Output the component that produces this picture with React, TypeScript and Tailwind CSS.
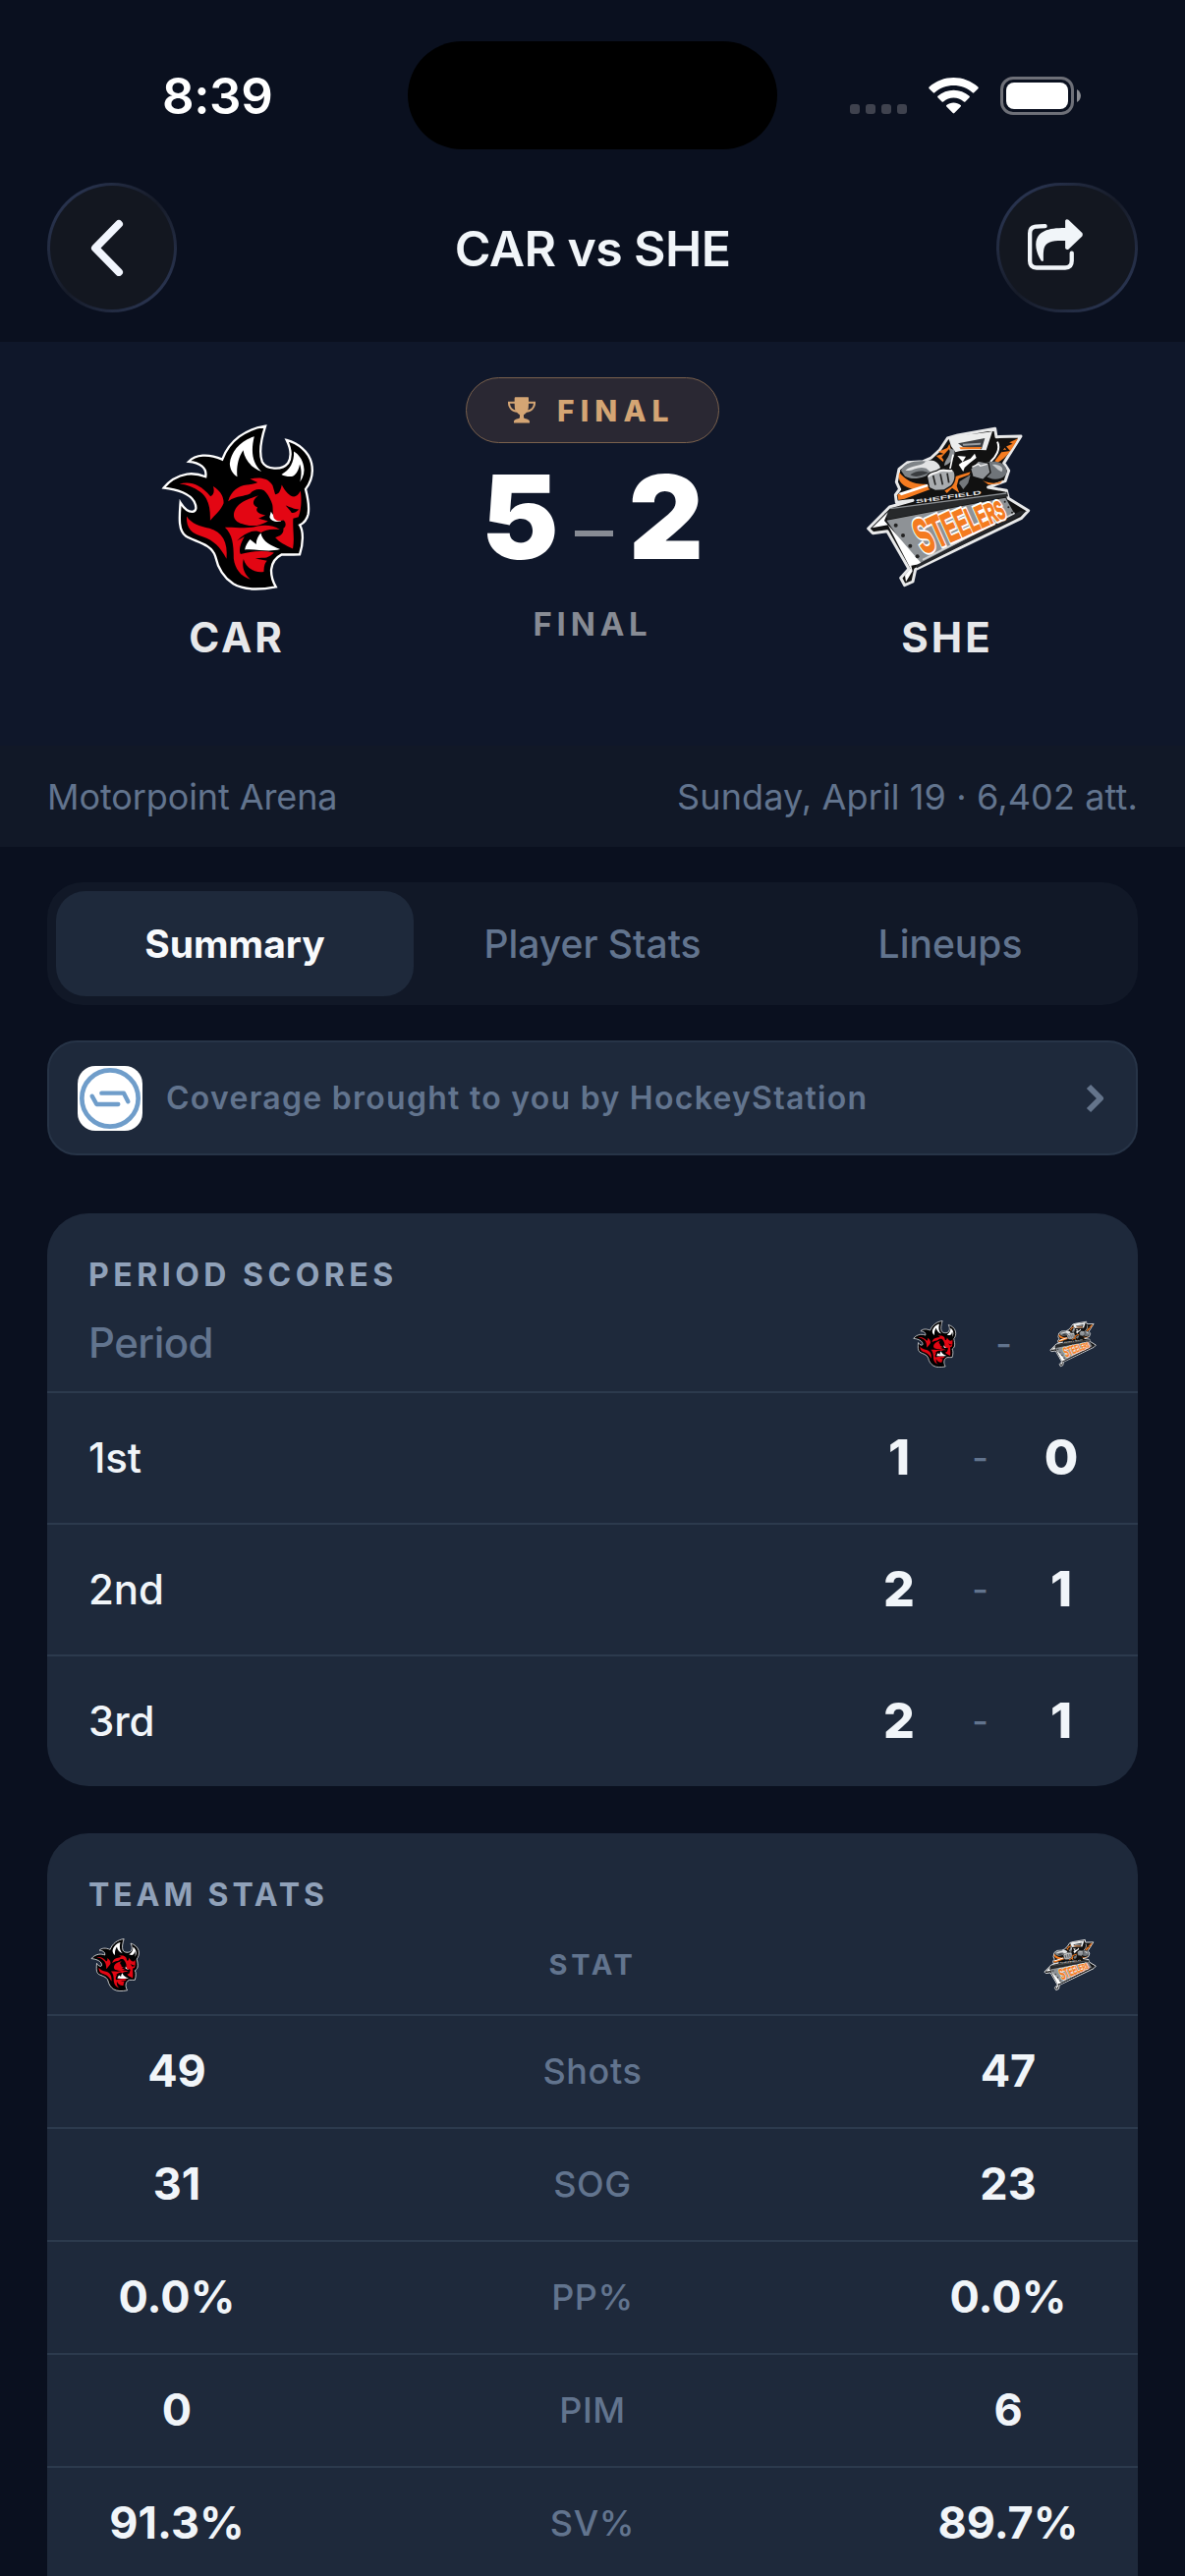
const tabs = ['Summary', 'Player Stats', 'Lineups'];

const periods = [
  { label: '1st', home: 1, away: 0 },
  { label: '2nd', home: 2, away: 1 },
  { label: '3rd', home: 2, away: 1 },
];

const teamStats = [
  { label: 'Shots', home: '49', away: '47' },
  { label: 'SOG', home: '31', away: '23' },
  { label: 'PP%', home: '0.0%', away: '0.0%' },
  { label: 'PIM', home: '0', away: '6' },
  { label: 'SV%', home: '91.3%', away: '89.7%' },
];

const beamLetters = [
  { char: 'S', size: 152 },
  { char: 'T', size: 138 },
  { char: 'E', size: 127 },
  { char: 'E', size: 116 },
  { char: 'L', size: 106 },
  { char: 'E', size: 96 },
  { char: 'R', size: 87 },
  { char: 'S', size: 79 },
];

function DevilsLogo({ className }: { className: string }) {
  return (
    <svg className={className} viewBox="71 64 466 508" aria-hidden="true">
      <path
        d="M390 69C376 112 370 150 380 178C392 202 440 206 459 183C473 160 466 134 455 112C490 122 522 146 531 182C538 214 530 240 513 262C519 285 525 315 521 338C517 356 507 366 495 372C507 390 506 428 495 462C478 463 458 462 440 462C420 472 410 486 408 508C407 526 413 545 422 561C370 571 325 572 292 552C262 532 245 505 237 468C224 428 176 424 147 406C122 388 127 345 130 303C140 319 152 331 166 331C180 330 180 316 172 300C160 278 122 262 79 258C96 236 118 222 150 216C172 213 192 218 207 224C212 196 188 181 155 178C176 156 214 152 258 171C280 112 330 78 390 69Z"
        fill="#000"
        stroke="#fff"
        strokeWidth="7"
      />
      <g fill="#fff">
        <path d="M356 101C315 112 284 148 281 184C282 202 291 216 304 224C301 199 305 169 322 143C327 172 346 197 378 208C349 181 345 145 356 101Z" />
        <path d="M477 147C479 179 464 205 439 217C453 224 473 227 480 218C489 210 493 198 495 186C502 205 500 222 496 240C507 224 511 207 507 191C503 171 492 156 477 147Z" />
        <path d="M407 331C415 348 428 348 438 360C422 364 405 358 403 347Z" />
        <path d="M376 396C368 405 361 418 362 431L343 416C336 425 329 435 327 447C365 445 398 456 435 446C410 435 381 424 376 396Z" />
      </g>
      <g fill="#e30613">
        <path d="M127 246C159 237 190 246 222 284C232 280 235 268 230 253C252 266 263 284 262 305C254 326 238 338 221 358C222 319 216 289 190 270C170 256 149 248 127 246Z" />
        <path d="M149 345C164 368 189 376 219 382C258 393 276 425 271 475C250 436 232 420 200 408C164 398 148 383 149 345Z" />
        <path d="M276 299C285 268 307 252 333 249C348 247 360 245 366 241L343 231C371 225 396 226 412 250L420 278C430 278 436 270 440 249C455 277 480 303 497 268C502 292 499 330 491 347L475 352C473 387 480 413 474 444C452 435 430 423 420 410C435 405 447 399 445 382C455 377 453 361 445 357C433 361 425 361 416 351C411 333 414 320 411 308C405 290 397 277 386 266C371 259 353 263 343 276C325 285 304 281 276 299Z" />
        <path d="M369 281C350 289 312 298 299 322C287 343 294 362 320 368C344 377 371 377 398 360L369 352L390 342C370 339 357 329 366 318C345 309 353 292 369 281Z" />
        <path d="M266 379C293 377 333 386 366 375C392 371 415 373 434 386C405 382 389 388 377 395C355 381 326 398 303 420L326 407C315 427 307 448 314 461C348 452 381 449 416 456C409 464 397 474 377 472L359 474L395 481C386 490 386 502 385 515C360 520 330 504 323 476C317 499 325 523 344 538C314 529 297 505 293 475C293 430 289 401 266 379Z" />
      </g>
      <path d="M452 312C465 316 475 323 493 324C480 336 470 338 467 329Z" />
    </svg>
  );
}

function SteelersLogo({ className }: { className: string }) {
  const letters = beamLetters.map((letter, i) => (
    <tspan key={i} fontSize={letter.size}>{letter.char}</tspan>
  ));

  return (
    <svg className={className} viewBox="64 72 504 492" aria-hidden="true">
      <path
        d="M72 384L137 318L208 298L158 304L155 281L168 264L158 242L166 202L192 182L240 179L264 168L290 144L314 108L345 99L459 79L463 104L538 102L486 184L501 207L490 239L438 258L494 268L500 292L561 329L540 352L216 509L208 546L183 557L171 535L196 507L130 392L86 398Z"
        fill="#111"
        stroke="#e8e9ea"
        strokeWidth="9"
        strokeLinejoin="round"
      />
      {/* Player */}
      <path d="M458 178L500 122L529 109C510 145 493 168 467 183Z" fill="#f47b20" />
      <path d="M466 119C477 141 461 167 445 180" fill="none" stroke="#fff" strokeWidth="6" />
      <path d="M487 117L505 125L488 132L499 145L479 148" fill="none" stroke="#111" strokeWidth="6" />
      <path d="M167 213C158 238 177 259 218 266L250 255L248 248C211 250 188 238 167 213Z" fill="#f47b20" />
      <path d="M172 207C181 178 234 171 267 183C288 189 288 208 271 215C245 223 215 241 184 224Z" fill="#7f8488" />
      <path d="M185 207C203 188 238 194 247 179C265 169 289 181 292 199L267 216L249 200C221 192 209 210 185 207Z" fill="#e2e3e4" />
      <path d="M200 220C216 206 240 205 256 214C240 220 220 232 200 220Z" fill="#3a3d40" />
      <path d="M286 149L313 138L320 125L326 151L308 165L300 180L279 162L302 156Z" fill="#f47b20" />
      <path d="M296 166L318 142L324 150L304 178Z" fill="#111" />
      <path d="M318 111C327 96 388 99 451 87L432 145C396 143 359 143 338 151L325 133Z" fill="#eceded" />
      <path d="M346 124L428 108L418 142L362 136Z" fill="#3b3e42" />
      <path d="M360 125L416 122L414 128L362 131Z" fill="#9a9ea2" />
      <path d="M350 136L418 135L415 142L354 142Z" fill="#f47b20" />
      <path d="M320 138C326 162 306 171 304 192C322 188 339 166 335 145Z" fill="#8f9498" />
      <path d="M331 158L321 205L311 203" fill="none" stroke="#fff" strokeWidth="5" />
      <path d="M344 162L370 164L360 181L384 170L397 155L402 168L382 184L366 198L362 210L348 189L360 180Z" fill="#fff" />
      <path d="M326 238L349 228L342 254L350 275L328 260L312 276L304 267Z" fill="#f47b20" />
      <path d="M351 240L384 220L377 245L362 264L350 247Z" fill="#74787c" />
      <path d="M161 280L384 211L380 220L183 293L164 297Z" fill="#f47b20" />
      <path d="M164 276L252 248L256 255L173 283Z" fill="#fff" />
      <path d="M421 237C447 249 471 248 485 234L474 247L439 250Z" fill="#f47b20" />
      <path d="M433 181C475 174 499 190 494 215C481 239 444 238 427 220Z" fill="#6f7479" />
      <path d="M450 188C475 187 488 199 479 211C467 205 461 197 450 188Z" fill="#c4c7c9" />
      <path d="M251 225C258 208 279 212 287 204C304 196 314 207 328 202C342 212 339 240 325 254L303 267L276 268L258 260Z" fill="#a9acaf" stroke="#111" strokeWidth="4" />
      <path d="M256 226C262 214 280 216 288 209C304 201 314 211 328 207" fill="none" stroke="#f4f4f4" strokeWidth="6" />
      <path d="M270 222L277 251M292 217L299 250M313 215L318 244" fill="none" stroke="#222" strokeWidth="5" />
      <path d="M384 202L408 177L439 184L445 213L423 235L391 226Z" fill="#8f9397" stroke="#111" strokeWidth="4" />
      <path d="M389 196L408 187L414 193L435 187" fill="none" stroke="#f4f4f4" strokeWidth="4" />
      {/* Beam */}
      <path d="M122 339L146 322L496 272L499 286L132 356Z" fill="#27292b" />
      <path d="M139 323L494 276" fill="none" stroke="#8b8f93" strokeWidth="4" />
      <path d="M128 359L491 290L519 340L221 495Z" fill="#8e9296" />
      <path d="M84 382L132 334L121 360L235 491L203 497L207 514L187 547L184 527L201 506L132 373Z" fill="#fff" />
      <path d="M218 496L537 330L553 332L524 351L220 505Z" fill="#24262a" />
      <path d="M238 479L519 337" fill="none" stroke="#d2d4d5" strokeWidth="5" />
      <g fill="#222">
        <circle cx="156" cy="374" r="6" />
        <circle cx="178" cy="405" r="6" />
        <circle cx="200" cy="437" r="6" />
        <circle cx="222" cy="469" r="6" />
        <circle cx="489" cy="302" r="3" />
        <circle cx="500" cy="319" r="3" />
        <circle cx="511" cy="335" r="3" />
      </g>
      <text
        transform="translate(218 307) rotate(-8) scale(1 0.75)"
        textLength="202"
        lengthAdjust="spacingAndGlyphs"
        className="fill-[#e4e5e6] font-['Liberation_Sans'] text-[22px] font-bold"
      >
        SHEFFIELD
      </text>
      {/* White keyline sits under the whole word, orange letters on top */}
      <g transform="matrix(0.43 -0.195 0.4 0.9 240 463)" className="font-['Liberation_Sans'] font-bold">
        <text fill="#fff" stroke="#fff" strokeWidth="17" aria-hidden="true">{letters}</text>
        <text fill="#f47b20" stroke="#f47b20" strokeWidth="5">{letters}</text>
      </g>
    </svg>
  );
}

function StatusBar() {
  return (
    <div className="flex h-[186px] items-start pt-[42px]">
      <div className="flex h-[112px] w-[415px] items-center pl-[165px]">
        <span className="text-[51px] font-semibold tracking-[-0.4px] text-white">8:39</span>
      </div>
      <div className="h-[110px] w-[376px] rounded-full bg-black" />
      <div className="flex h-[111px] flex-1 items-center pl-[74px]">
        <div className="flex gap-[6px] pt-[27px]">
          {[0, 1, 2, 3].map((dot) => (
            <div key={dot} className="size-[10px] rounded-[3px] bg-[#3f424e]" />
          ))}
        </div>
        <svg className="ml-[22px] h-[37px] w-[51px]" viewBox="0 0 51 37" fill="#fff" aria-hidden="true">
          <path d="M.6 9.6C14.5-3.2 36.500-3.200 50.400 9.600Q51.100 10.400 50.400 11.200L46.300 15.300Q45.500 16 44.700 15.300C34 5.700 17 5.700 6.300 15.300Q5.500 16 4.700 15.300L.6 11.200Q-.1 10.400.6 9.600Z" />
          <path d="M9.400 18.800C18.400 10.700 32.600 10.700 41.600 18.800Q42.300 19.600 41.600 20.300L37.400 24.500Q36.700 25.200 35.900 24.500C30 19.200 21 19.200 15.100 24.500Q14.300 25.200 13.600 24.500L9.400 20.300Q8.700 19.600 9.400 18.800Z" />
          <path d="M18.300 28.100C22.300 24.700 28.700 24.700 32.700 28.100Q33.400 28.900 32.700 29.600L26.300 36.100Q25.500 36.900 24.700 36.100L18.300 29.600Q17.600 28.900 18.300 28.100Z" />
        </svg>
        <svg className="ml-[22px] h-[39px] w-[83px]" viewBox="0 0 83 39" aria-hidden="true">
          <rect x="1.500" y="1.500" width="72" height="36" rx="11.500" fill="none" stroke="#6e7078" strokeWidth="3" />
          <rect x="6" y="6" width="63" height="27" rx="8" fill="#fff" />
          <path d="M78 13V26C83.300 23 83.300 16 78 13Z" fill="#8a8c92" />
        </svg>
      </div>
    </div>
  );
}

function NavBar() {
  return (
    <div className="flex h-[162px] items-start justify-between px-[48px]">
      <div className="w-[144px]">
        <button className="block size-[132px] rounded-full bg-linear-to-br from-[#303d5e] via-[#161b28] to-[#303d5e] p-[3px]">
          <span className="flex size-full items-center justify-center rounded-full bg-[#131720] pr-[11px]">
            <svg className="h-[58px] w-[34px]" viewBox="0 0 34 58" fill="none" aria-hidden="true">
              <path d="M29 5L5 29.500L29 54" stroke="#f1f5fd" strokeWidth="8" strokeLinecap="round" strokeLinejoin="round" />
            </svg>
          </span>
        </button>
      </div>
      <h1 className="flex h-[134px] items-center text-[50px] font-semibold tracking-[-0.6px] text-slate-100">CAR vs SHE</h1>
      <button className="h-[132px] w-[144px] rounded-full bg-linear-to-br from-[#303d5e] via-[#161b28] to-[#303d5e] p-[3px]">
        <span className="flex size-full items-center rounded-full bg-[#131720] pb-[7px] pl-[29px]">
          <svg className="h-[52px] w-[56px]" viewBox="618 516 169 156" aria-hidden="true">
            <path
              d="M671 537C655 538 645 537 639 539C629 541 624.500 549 624.500 559V644Q624.500 665 645 665H733Q753 665 753 644V620"
              fill="none"
              stroke="#f1f5f9"
              strokeWidth="13"
              strokeLinecap="round"
            />
            <path
              d="M733 520Q737 514 743 518L785 558Q788 563 785 568L743 608Q737 611 733 605V582C696 581 675 584 668 605C665 617 666 630 666 643Q663 648 659 643C648 626 642 606 643 592C646 552 680 543 733 543Z"
              fill="#f1f5f9"
            />
          </svg>
        </span>
      </button>
    </div>
  );
}

function Scoreboard() {
  return (
    <section className="flex h-[411px] bg-[#0f172a] px-[48px]">
      <div className="flex w-[386px] flex-col items-center pt-[84px]">
        <DevilsLogo className="h-[169px] w-[155px]" />
        <span className="mt-[22px] text-[42px] leading-[52px] font-bold tracking-[2.800px] text-[#e7e8ea]">CAR</span>
      </div>
      <div className="flex flex-1 flex-col items-center pt-[36px]">
        <div className="flex h-[67px] w-[258px] items-center rounded-full border-[1.500px] border-[#7a614d] bg-[#2a2833] pl-[42px]">
          <svg className="h-[27px] w-[28px]" viewBox="0 0 84 80" fill="#d4a574" aria-hidden="true">
            <path d="M22 0H62Q63 0 63 5V14H84V20C83 36 70 46 57 47Q52 53 48 54V63C50 66 66 67 66 74V79H18V74C18 67 34 66 36 63V54Q32 53 27 47C14 46 1 36 0 20V14H20V5Q20 0 22 0ZM6 20C7 31 14 38 22 40Q20 33 20 20ZM78 20H63Q63 33 61 40C70 38 77 31 78 20Z" />
          </svg>
          <span className="ml-[22px] pt-[2px] text-[30px] font-extrabold tracking-[6.100px] text-[#d4a574]">FINAL</span>
        </div>
        <div className="mt-[16px] flex h-[118px] items-center text-[118px] leading-none font-black text-white">
          <span>5</span>
          <span className="mx-[16px] mt-[34px] h-[6px] w-[39px] bg-[#878b94]" />
          <span>2</span>
        </div>
        <span className="mt-[30px] text-[33px] leading-[40px] font-bold tracking-[4.800px] text-[#878b94]">FINAL</span>
      </div>
      <div className="flex w-[386px] flex-col items-center pt-[86px]">
        <SteelersLogo className="h-[164px] w-[168px]" />
        <span className="mt-[25px] pr-[2px] text-[42px] leading-[52px] font-bold tracking-[3px] text-[#e7e8ea]">SHE</span>
      </div>
    </section>
  );
}

function Tabs() {
  return (
    <div className="mt-[36px] flex h-[125px] rounded-[36px] bg-[#111827] p-[9px]">
      {tabs.map((tab, i) => (
        <button
          key={tab}
          className={
            i === 0
              ? 'flex-1 rounded-[30px] bg-[#1e293b] pt-[2px] text-[39px] font-bold text-slate-50'
              : 'flex-1 pt-[2px] text-[39px] font-medium text-slate-500'
          }
        >
          {tab}
        </button>
      ))}
    </div>
  );
}

function SponsorBanner() {
  return (
    <div className="mt-[36px] flex h-[117px] items-center rounded-[30px] border-2 border-[#273447] bg-[#1e293b] pr-[32px] pl-[29px]">
      <div className="size-[66px] rounded-[18px] bg-white">
        <svg viewBox="0 0 198 198" fill="none" stroke="#6f9dca" aria-hidden="true">
          <circle cx="99" cy="99" r="86" strokeWidth="14" />
          <path d="M73 83H141L154 109" strokeWidth="13" strokeLinecap="round" strokeLinejoin="round" />
          <path d="M44 92L58 117H124" strokeWidth="13" strokeLinecap="round" strokeLinejoin="round" />
        </svg>
      </div>
      <span className="ml-[24px] text-[32px] font-semibold tracking-[1.270px] text-slate-500">
        Coverage brought to you by HockeyStation
      </span>
      <svg className="ml-auto h-[30px] w-[20px]" viewBox="0 0 20 30" fill="none" aria-hidden="true">
        <path d="M4 3L16 15L4 27" stroke="#64748b" strokeWidth="6" strokeLinejoin="round" />
      </svg>
    </div>
  );
}

function PeriodScores() {
  return (
    <section className="mt-[59px] overflow-hidden rounded-[42px] bg-[#1e293b]">
      <h2 className="px-[42px] pt-[42px] text-[32px] leading-[42px] font-bold tracking-[4.500px] text-slate-400">PERIOD SCORES</h2>
      <div className="flex h-[97px] items-center px-[42px]">
        <span className="flex-1 pb-[3px] text-[42px] font-medium tracking-[-0.500px] text-slate-500">Period</span>
        <DevilsLogo className="h-[48px] w-[48px]" />
        <span className="w-[93px] text-center text-[36px] font-medium text-slate-500">-</span>
        <SteelersLogo className="h-[48px] w-[48px]" />
      </div>
      {periods.map((period) => (
        <div key={period.label} className="flex h-[134px] items-center border-t-2 border-[#2c3a4d] px-[42px]">
          <span className="flex-1 pb-[2px] text-[42px] font-medium tracking-[-0.100px] text-slate-100">{period.label}</span>
          <span className="w-[72px] pb-[2px] text-center text-[50px] font-extrabold text-slate-100">{period.home}</span>
          <span className="w-[93px] text-center text-[36px] font-medium text-slate-500">-</span>
          <span className="w-[72px] pb-[2px] text-center text-[50px] font-extrabold text-slate-100">{period.away}</span>
        </div>
      ))}
    </section>
  );
}

function TeamStats() {
  return (
    <section className="mt-[48px] overflow-hidden rounded-t-[42px] bg-[#1e293b]">
      <h2 className="px-[42px] pt-[42px] text-[32px] leading-[42px] font-bold tracking-[3.900px] text-slate-400">TEAM STATS</h2>
      <div className="flex h-[100px] items-center justify-between px-[42px]">
        <DevilsLogo className="h-[54px] w-[54px]" />
        <span className="text-[29px] font-bold tracking-[3.700px] text-slate-500">STAT</span>
        <SteelersLogo className="h-[54px] w-[54px]" />
      </div>
      {teamStats.map((stat) => (
        <div key={stat.label} className="flex h-[115px] items-center border-t-2 border-[#2c3a4d] px-[42px] pb-[2px]">
          <span className="w-[180px] text-center text-[45px] font-bold text-slate-100">{stat.home}</span>
          <span className="flex-1 text-center text-[36px] font-medium tracking-[0.600px] text-slate-500">{stat.label}</span>
          <span className="w-[180px] text-center text-[45px] font-bold text-slate-100">{stat.away}</span>
        </div>
      ))}
    </section>
  );
}

export default function App() {
  return (
    <div className="h-[2622px] w-[1206px] overflow-hidden bg-[#0a101f] font-['Inter',sans-serif]">
      <StatusBar />
      <NavBar />
      <Scoreboard />
      <div className="flex h-[103px] items-center justify-between bg-[#111827] px-[48px] text-[36px] text-slate-500">
        <span className="tracking-[-0.100px]">Motorpoint Arena</span>
        <span className="tracking-[0.120px]">Sunday, April 19 · 6,402 att.</span>
      </div>
      <main className="px-[48px]">
        <Tabs />
        <SponsorBanner />
        <PeriodScores />
        <TeamStats />
      </main>
    </div>
  );
}
